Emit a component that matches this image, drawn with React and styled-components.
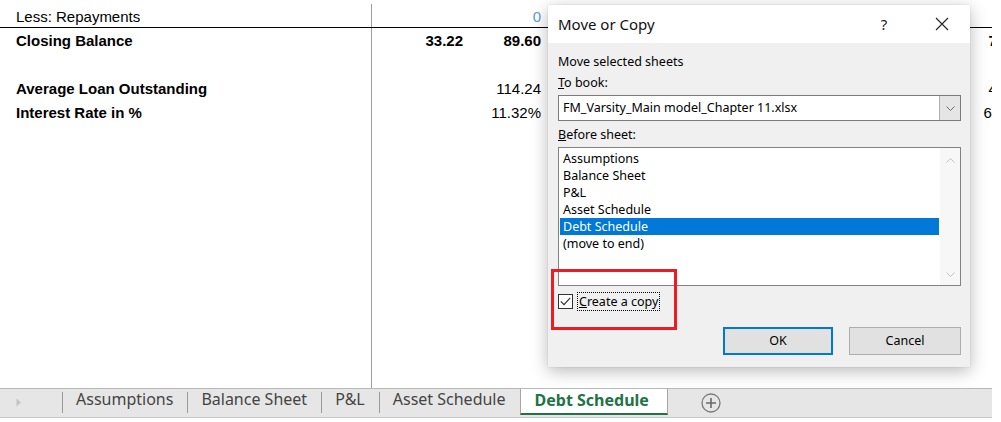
import React from "react";
import styled, { createGlobalStyle } from "styled-components";

const GlobalStyle = createGlobalStyle`
  html, body {
    margin: 0;
    padding: 0;
    background: #fff;
  }
`;

const Screen = styled.div`
  position: relative;
  width: 992px;
  height: 422px;
  overflow: hidden;
  display: flex;
  flex-direction: column;
  background: #fff;
`;

/* ---------- sheet ---------- */

const Sheet = styled.div`
  flex: 1;
  display: flex;
  flex-direction: column;
  padding-top: 4px;
  font-family: "Liberation Sans", Arial, sans-serif;
  font-size: 15px;
  color: #000;
`;

const COLS = "372px 95px 78px 78px 78px 78px 78px 78px 95px";

const Row = styled.div`
  display: grid;
  grid-template-columns: ${COLS};
  height: 24px;
  box-sizing: border-box;
  border-bottom: ${(p) => (p.$underline ? "1px solid #000" : "none")};
  flex-shrink: 0;
`;

const Filler = styled.div`
  display: grid;
  grid-template-columns: ${COLS};
  flex: 1;
`;

const LabelCell = styled.div`
  display: flex;
  align-items: center;
  padding-left: 16px;
  padding-top: ${(p) => (p.$first ? 1 : 0)}px;
  border-right: 1px solid #9e9e9e;
  font-weight: ${(p) => (p.$bold ? 700 : 400)};
  white-space: nowrap;
`;

const Cell = styled.div`
  display: flex;
  align-items: center;
  justify-content: flex-end;
  padding-right: 4px;
  padding-top: ${(p) => (p.$first ? 1 : 0)}px;
  white-space: nowrap;
  font-weight: ${(p) => (p.$bold ? 700 : 400)};
  color: ${(p) => p.$color || "#000"};
`;

/* ---------- tab bar ---------- */

const TabBar = styled.div`
  height: 30px;
  box-sizing: border-box;
  display: flex;
  align-items: stretch;
  background: #e6e6e6;
  border-top: 1px solid #b9b9b9;
  border-bottom: 1px solid #c8c8c8;
  margin-bottom: 4px;
  font-family: "Noto Sans", "Open Sans", sans-serif;
  font-size: 16px;
  color: #444;
`;

const NavArea = styled.div`
  width: 62px;
  display: flex;
  align-items: center;
  padding-left: 16px;
  padding-bottom: 2px;
  box-sizing: border-box;
`;

const Tab = styled.div`
  position: relative;
  display: flex;
  align-items: center;
  padding: 0 14px 8px 14px;
  white-space: nowrap;

  &::before {
    content: "";
    position: absolute;
    left: 0;
    top: 3px;
    height: 21px;
    width: 1px;
    background: #9a9a9a;
  }
`;

const ActiveTab = styled.div`
  align-self: flex-start;
  display: flex;
  align-items: center;
  margin-top: -1px;
  height: 27px;
  box-sizing: border-box;
  padding: 0 18px 3px 14px;
  background: #fff;
  border: 1px solid #a6a6a6;
  border-top-color: #b9b9b9;
  border-bottom: 2px solid #217346;
  color: #217346;
  font-weight: 700;
  white-space: nowrap;
`;

const AddSheet = styled.div`
  display: flex;
  align-items: center;
  padding-left: 33px;
  padding-bottom: 1px;
`;

/* ---------- dialog ---------- */

const Dialog = styled.div`
  position: absolute;
  left: 548px;
  top: 5px;
  width: 422px;
  height: 362px;
  background: #f0f0f0;
  box-shadow: 0 4px 16px rgba(0, 0, 0, 0.28), 0 0 1px rgba(0, 0, 0, 0.2);
  display: flex;
  flex-direction: column;
  font-family: "Noto Sans", "Open Sans", sans-serif;
  font-size: 12.5px;
  color: #000;
`;

const TitleBar = styled.div`
  height: 38px;
  background: #fff;
  display: flex;
  align-items: center;
  padding-left: 10px;
`;

const Title = styled.div`
  flex: 1;
  font-size: 15px;
  color: #111;
`;

const TitleButton = styled.div`
  width: ${(p) => p.$w}px;
  margin-right: ${(p) => p.$mr}px;
  height: 38px;
  display: flex;
  align-items: center;
  justify-content: center;
  font-size: 15px;
  color: #222;
`;

const Body = styled.div`
  flex: 1;
  display: flex;
  flex-direction: column;
  padding: 10px 9px 12px 10px;
`;

const Label = styled.div`
  line-height: 17px;
  height: 16px;
  margin-top: ${(p) => p.$mt || 0}px;
  white-space: nowrap;
`;

const Combo = styled.div`
  margin-top: 5px;
  height: 26px;
  box-sizing: border-box;
  border: 1px solid #7a7a7a;
  background: #fff;
  display: flex;
  align-items: stretch;
`;

const ComboText = styled.div`
  flex: 1;
  display: flex;
  align-items: center;
  padding-left: 4px;
  padding-bottom: 1px;
`;

const ComboButton = styled.div`
  width: 20px;
  background: #e5e5e5;
  border-left: 1px solid #adadad;
  display: flex;
  align-items: center;
  justify-content: center;
`;

const ListBox = styled.div`
  margin-top: 5px;
  height: 139px;
  box-sizing: border-box;
  border: 1px solid #828282;
  background: #fff;
  display: flex;
`;

const Items = styled.div`
  flex: 1;
  padding: 2px 1px 0 1px;
`;

const Item = styled.div`
  height: 17px;
  line-height: 17px;
  padding-left: 3px;
  background: ${(p) => (p.$selected ? "#0078d7" : "transparent")};
  color: ${(p) => (p.$selected ? "#fff" : "#000")};
  white-space: nowrap;
`;

const ScrollBar = styled.div`
  width: 20px;
  background: #f7f7f7;
  display: flex;
  flex-direction: column;
  justify-content: space-between;
  align-items: center;
  padding: 10px 0 8px;
`;

const CheckRow = styled.div`
  margin-top: 6px;
  height: 19px;
  display: flex;
  align-items: center;
`;

const CheckBox = styled.div`
  width: 15px;
  height: 15px;
  box-sizing: border-box;
  border: 1px solid #333;
  background: #fff;
  display: flex;
  align-items: center;
  justify-content: center;
`;

const CheckLabel = styled.div`
  margin-left: 4px;
  padding: 0 1px 1px 1px;
  height: 19px;
  box-sizing: border-box;
  line-height: 17px;
  border: 1px dotted #000;
`;

const ButtonRow = styled.div`
  margin-top: 16px;
  display: flex;
  justify-content: flex-end;
  gap: 16px;
`;

const Button = styled.div`
  width: ${(p) => p.$w}px;
  height: 28px;
  box-sizing: border-box;
  background: #e1e1e1;
  border: ${(p) => (p.$default ? "2px solid #0078d7" : "1px solid #adadad")};
  display: flex;
  align-items: center;
  justify-content: center;
  padding-bottom: 1px;
`;

const Highlight = styled.div`
  position: absolute;
  left: 551px;
  top: 269px;
  width: 126px;
  height: 61px;
  box-sizing: border-box;
  border: 3px solid #ed1c24;
  pointer-events: none;
`;

/* ---------- icons ---------- */

const Chevron = ({ up, color = "#6d6d6d" }) => (
  <svg width="9" height="5" viewBox="0 0 9 5">
    <path
      d={up ? "M0.5 4.5 L4.5 0.5 L8.5 4.5" : "M0.5 0.5 L4.5 4.5 L8.5 0.5"}
      fill="none"
      stroke={color}
      strokeWidth="1"
    />
  </svg>
);

const CloseIcon = () => (
  <svg width="14" height="14" viewBox="0 0 14 14">
    <path d="M1 1 L13 13 M13 1 L1 13" stroke="#222" strokeWidth="1.1" />
  </svg>
);

const CheckMark = () => (
  <svg width="11" height="9" viewBox="0 0 11 9">
    <path d="M0.8 4.4 L4 7.6 L10.2 0.8" fill="none" stroke="#333" strokeWidth="1.2" />
  </svg>
);

const PlusCircle = () => (
  <svg width="20" height="20" viewBox="0 0 20 20">
    <circle cx="10" cy="10" r="9" fill="none" stroke="#7a7a7a" strokeWidth="1.3" />
    <path d="M10 5 V15 M5 10 H15" stroke="#6a6a6a" strokeWidth="1.6" />
  </svg>
);

const NavArrow = () => (
  <svg width="6" height="9" viewBox="0 0 6 9">
    <path d="M0.5 0.5 L5 4.5 L0.5 8.5 Z" fill="#c4c4c4" />
  </svg>
);

const rows = [
  { label: "Less: Repayments", underline: true, vals: ["", "0", "", "", "", "", "", ""], color: "#5b9bd5" },
  { label: "Closing Balance", bold: true, vals: ["33.22", "89.60", "", "", "", "", "", "73.50"] },
  { label: "", vals: [] },
  { label: "Average Loan Outstanding", bold: true, vals: ["", "114.24", "", "", "", "", "", "47.12"], valueBold: false },
  { label: "Interest Rate in %", bold: true, vals: ["", "11.32%", "", "", "", "", "", "6.84%"], valueBold: false },
];

const sheets = ["Assumptions", "Balance Sheet", "P&L", "Asset Schedule"];
const listItems = ["Assumptions", "Balance Sheet", "P&L", "Asset Schedule", "Debt Schedule", "(move to end)"];

export default function App() {
  return (
    <>
      <GlobalStyle />
      <Screen>
        <Sheet>
          {rows.map((r, i) => (
            <Row key={i} $underline={r.underline}>
              <LabelCell $bold={r.bold} $first={i === 0}>
                {r.label}
              </LabelCell>
              {Array.from({ length: 8 }).map((_, j) => (
                <Cell
                  key={j}
                  $first={i === 0}
                  $bold={r.valueBold === false ? false : r.bold}
                  $color={r.color}
                >
                  {r.vals[j] || ""}
                </Cell>
              ))}
            </Row>
          ))}
          <Filler>
            <LabelCell />
          </Filler>
        </Sheet>

        <TabBar>
          <NavArea>
            <NavArrow />
          </NavArea>
          {sheets.map((s) => (
            <Tab key={s}>{s}</Tab>
          ))}
          <ActiveTab>Debt Schedule</ActiveTab>
          <AddSheet>
            <PlusCircle />
          </AddSheet>
        </TabBar>

        <Dialog>
          <TitleBar>
            <Title>Move or Copy</Title>
            <TitleButton $w={30} $mr={20}>?</TitleButton>
            <TitleButton $w={46} $mr={5}>
              <CloseIcon />
            </TitleButton>
          </TitleBar>
          <Body>
            <Label>Move selected sheets</Label>
            <Label $mt={5}>
              <u>T</u>o book:
            </Label>
            <Combo>
              <ComboText>FM_Varsity_Main model_Chapter 11.xlsx</ComboText>
              <ComboButton>
                <Chevron />
              </ComboButton>
            </Combo>
            <Label $mt={5}>
              <u>B</u>efore sheet:
            </Label>
            <ListBox>
              <Items>
                {listItems.map((it) => (
                  <Item key={it} $selected={it === "Debt Schedule"}>
                    {it}
                  </Item>
                ))}
              </Items>
              <ScrollBar>
                <Chevron up color="#c2c2c2" />
                <Chevron color="#c2c2c2" />
              </ScrollBar>
            </ListBox>
            <CheckRow>
              <CheckBox>
                <CheckMark />
              </CheckBox>
              <CheckLabel>
                <u>C</u>reate a copy
              </CheckLabel>
            </CheckRow>
            <ButtonRow>
              <Button $w={110} $default>
                OK
              </Button>
              <Button $w={112}>Cancel</Button>
            </ButtonRow>
          </Body>
        </Dialog>

        <Highlight />
      </Screen>
    </>
  );
}
